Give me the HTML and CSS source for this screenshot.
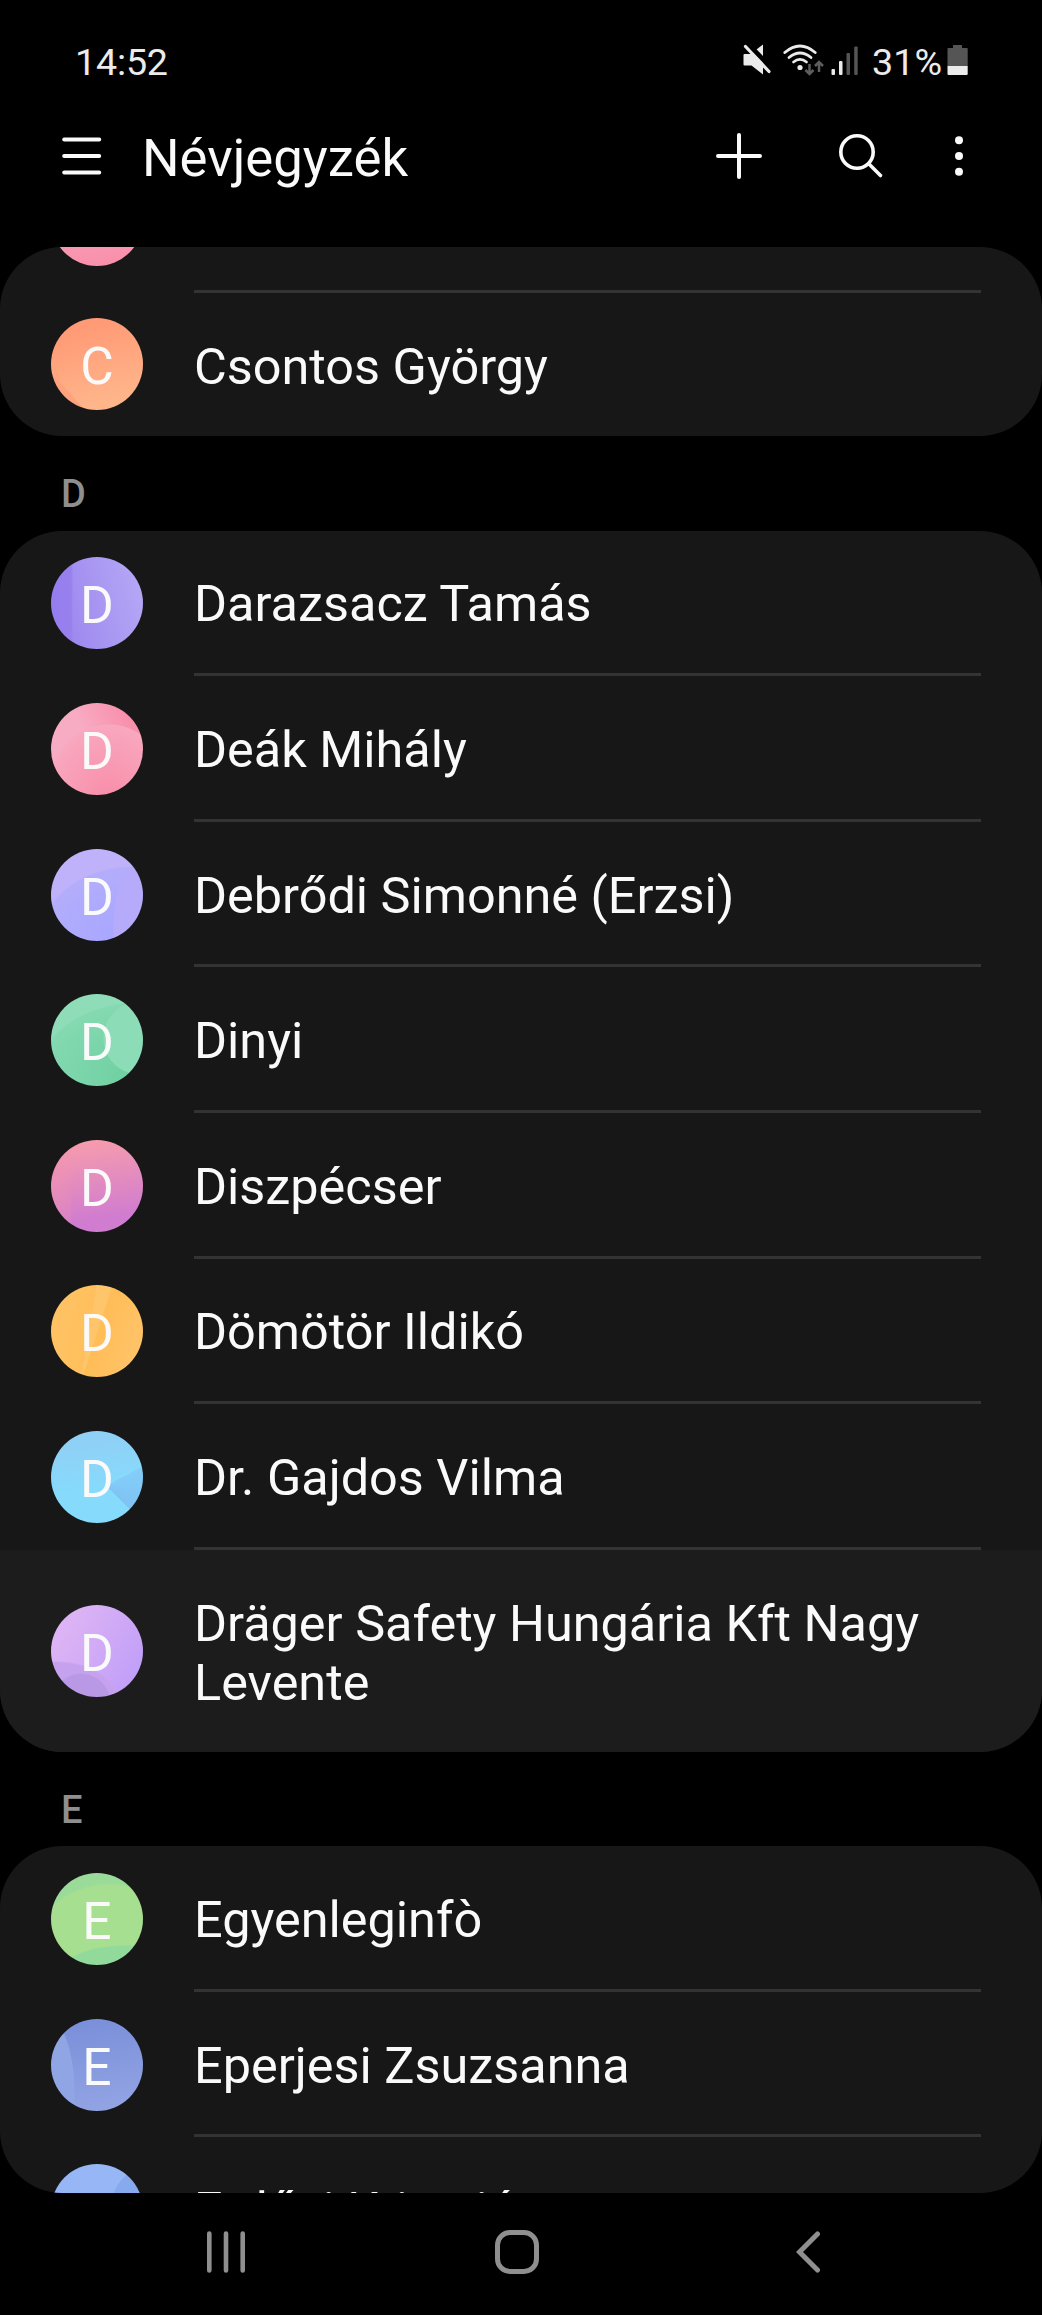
FILE: index.html
```html
<!DOCTYPE html>
<html lang="hu">
<head>
<meta charset="utf-8">
<title>Névjegyzék</title>
<link rel="stylesheet" href="styles.css">
</head>
<body>
<div class="phone">
  <header class="status">
    <span class="clock">14:52</span>
    <div class="indicators">
      <svg class="mute" width="29" height="32" viewBox="0 0 29 32"><path d="M1.500 10h6L20 0.500V30.500L8.500 21.500h-7a1 1 0 0 1-1-1V11a1 1 0 0 1 1-1z" fill="#ebebeb"/><path d="M4 -1L30 26" stroke="#000" stroke-width="5"/><path d="M2.500 2.500L26 27.500" stroke="#ebebeb" stroke-width="3.200" stroke-linecap="round"/></svg>
      <svg class="wifi" width="41" height="32" viewBox="0 0 41 32" fill="none"><g stroke="#ebebeb" stroke-width="2.800" stroke-linecap="round"><path d="M1.800 8.500Q17 -4.500 32.200 8.500"/><path d="M6 13.500Q17 4.500 28 13.500"/><path d="M10.500 18Q17 12.800 23.500 18"/></g><circle cx="17" cy="23.500" r="2.600" fill="#ebebeb"/><g stroke="#5e5e5e" stroke-width="2.500"><path d="M26.500 20v10M22.500 26l4 4 4-4M36 28V18M32 22l4-4 4 4"/></g></svg>
      <svg class="signal" width="28" height="32" viewBox="0 0 28 32"><g fill="#ebebeb"><rect x="0.500" y="25" width="3.500" height="6" rx="1"/><rect x="8" y="17" width="3.500" height="14" rx="1"/></g><g fill="#555"><rect x="15.500" y="9" width="3.500" height="22" rx="1"/><rect x="23.200" y="2.500" width="3.500" height="28.500" rx="1"/></g></svg>
      <span class="percent">31%</span>
      <svg class="battery" width="21" height="32" viewBox="0 0 21 32"><path d="M6 4V1.500Q6 1 6.500 1h8q.5 0 .5.500V4h5q.7 0 .7.700V22H.5V4.700Q.5 4 1.200 4z" fill="#555"/><path d="M.5 22h20.200v8q0 1-1 1H1.500q-1 0-1-1z" fill="#ebebeb"/></svg>
    </div>
  </header>
  <div class="toolbar">
    <svg class="menu" width="40" height="40" viewBox="0 0 40 40" stroke="#fafafa" stroke-width="4" stroke-linecap="round"><path d="M2.200 3.500h35M2.200 20h35M2.200 36.500h35"/></svg>
    <h1 class="title">Névjegyzék</h1>
    <svg class="add" width="48" height="48" viewBox="0 0 48 48" stroke="#fafafa" stroke-width="4" stroke-linecap="round"><path d="M24 3v42M3 24h42"/></svg>
    <svg class="search" width="46" height="46" viewBox="0 0 46 46" fill="none" stroke="#fafafa" stroke-width="3.600" stroke-linecap="round"><circle cx="19" cy="19" r="16.200"/><path d="M31 31l11.500 11.500"/></svg>
    <svg class="more" width="10" height="40" viewBox="0 0 10 40" fill="#fafafa"><circle cx="5" cy="4.300" r="4"/><circle cx="5" cy="20" r="4"/><circle cx="5" cy="35.700" r="4"/></svg>
  </div>
  <main class="contacts">
    <section class="card card-first">
      <div class="row row-cut-top"><span class="avatar pink"></span><span class="name"></span></div>
      <div class="row"><span class="avatar orange">C</span><span class="name">Csontos György</span></div>
    </section>
    <h2 class="letter">D</h2>
    <section class="card">
      <div class="row"><span class="avatar violet">D</span><span class="name">Darazsacz Tamás</span></div>
      <div class="row"><span class="avatar rose">D</span><span class="name">Deák Mihály</span></div>
      <div class="row"><span class="avatar lavender">D</span><span class="name">Debrődi Simonné (Erzsi)</span></div>
      <div class="row"><span class="avatar green">D</span><span class="name">Dinyi</span></div>
      <div class="row"><span class="avatar magenta">D</span><span class="name">Diszpécser</span></div>
      <div class="row"><span class="avatar amber">D</span><span class="name">Dömötör Ildikó</span></div>
      <div class="row"><span class="avatar sky">D</span><span class="name">Dr. Gajdos Vilma</span></div>
      <div class="row row-tall"><span class="avatar lilac">D</span><span class="name">Dräger Safety Hungária Kft Nagy Levente</span></div>
    </section>
    <h2 class="letter">E</h2>
    <section class="card card-last">
      <div class="row"><span class="avatar lime">E</span><span class="name">Egyenleginfò</span></div>
      <div class="row"><span class="avatar indigo">E</span><span class="name">Eperjesi Zsuzsanna</span></div>
      <div class="row"><span class="avatar blue">E</span><span class="name">Erdősi Krisztián</span></div>
    </section>
  </main>
  <nav class="navbar">
    <svg class="recents" width="40" height="42" viewBox="0 0 40 42" stroke="#8f8f8f" stroke-width="4.600" stroke-linecap="round"><path d="M3.300 2.500v37M20 2.500v37M36.700 2.500v37"/></svg>
    <svg class="home" width="44" height="44" viewBox="0 0 44 44" fill="none" stroke="#8f8f8f" stroke-width="5"><rect x="2.500" y="2.500" width="39" height="39" rx="12.500"/></svg>
    <svg class="back" width="24" height="42" viewBox="0 0 24 42" fill="none" stroke="#8f8f8f" stroke-width="5" stroke-linecap="round"><path d="M21.500 3L3.500 21l18 18"/></svg>
  </nav>
</div>
</body>
</html>
```
FILE: styles.css
```css
* { box-sizing: border-box; }
body { margin: 0; background: #000; font-family: Roboto, sans-serif; color: #fafafa; }
h1, h2 { margin: 0; font-weight: 400; }
svg { display: block; flex: none; }
.phone { width: 1042px; height: 2315px; overflow: hidden; display: flex; flex-direction: column; }
.status { height: 100px; padding: 0 74px 0 75px; display: flex; justify-content: space-between; font-size: 37.700px; line-height: 44px; color: #ebebeb; }
.clock { margin-top: 40px; letter-spacing: -0.200px; }
.indicators { display: flex; align-items: flex-start; padding-top: 44px; }
.wifi { margin-left: 11px; }
.signal { margin-left: 7px; }
.percent { margin: -4px 5px 0 13px; }
.toolbar { height: 147px; padding: 0 77.700px 0 62px; display: flex; align-items: flex-start; }
.menu { margin-top: 36px; }
.title { margin: 26px auto 0 40px; font-size: 52.700px; line-height: 64px; }
.add { margin-top: 32px; }
.search { margin: 33px 0 0 75.300px; }
.more { margin: 36px 0 0 70.300px; }
.card { background: #171717; border-radius: 62px; overflow: hidden; }
.card-first { height: 189px; display: flex; flex-direction: column; justify-content: flex-end; }
.card-last { height: 347.200px; }
.row { height: 145.620px; flex: none; display: flex; align-items: flex-start; padding: 26.800px 61px 0 51px; background: linear-gradient(#333, #333) 194px 100% / 787px 3px no-repeat; }
.row:last-child { background-image: none; }
.card-first .row:last-child { height: 143px; padding-top: 25px; }
.card-first .name { margin-top: 19px; }
.row-tall { height: 202px; background-color: #1c1c1c; padding-top: 0; align-items: center; }
.avatar { flex: none; width: 92px; height: 92px; border-radius: 50%; text-align: center; font-size: 51.500px; line-height: 97px; }
.name { width: 787px; margin: 17px 0 0 51px; font-size: 50.400px; line-height: 59px; }
.row-tall .name { margin-top: 4px; }
.letter { height: 94.500px; padding: 34px 0 0 61px; font-size: 38px; line-height: 48px; font-weight: 500; color: #8f8f8f; }

/* Avatar fills: soft gradients with a facet or curve laid over them */
.pink { background: linear-gradient(170deg, #f8acc4, #f98ea9); }
.orange { background:
  radial-gradient(ellipse 42px 58px at 47px 52px, #ffb48a00 0, #ffb48a00 99%, #ffffff00 100%),
  linear-gradient(48deg, #ff9f7c 0, #ffa27e 19%, #ffb48a00 20%),
  linear-gradient(165deg, #ff9a76 15%, #ffb58a 85%); }
.violet { background:
  linear-gradient(90deg, #957dee 0, #9881ee 22%, #ffffff00 24%),
  linear-gradient(75deg, #9a85ee 10%, #b8aaf6); }
.rose { background:
  radial-gradient(ellipse 65px 80px at 58px 101px, #f98ba7 0, #f8a8bf 99%, #ffffff00 100%),
  linear-gradient(65deg, #f8acc4 45%, #f88fab 85%); }
.lavender { background:
  radial-gradient(ellipse 36px 70px at 98px 78px, #b6abfb 98%, #ffffff00 100%),
  radial-gradient(ellipse 95px 75px at 82px 92px, #a8a7ff 20%, #b3adfb 98%, #ffffff00 100%),
  #c0b2fa; }
.green { background:
  radial-gradient(ellipse 34px 36px at 86px 44px, #8cdcb7 97%, #ffffff00 100%),
  radial-gradient(ellipse 110px 75px at 95px 82px, #6ccf9f 0, #84d9b1 98%, #ffffff00 100%),
  #8edcb8; }
.magenta { background:
  linear-gradient(90deg, #f493ae66 0, #f493ae33 21%, #ffffff00 23%),
  linear-gradient(172deg, #f59bae 8%, #d07cd0 82%); }
.amber { background:
  linear-gradient(108deg, #ffffff00 50%, #ffbd57 51%, #ffc368 90%),
  linear-gradient(100deg, #ffc262 20%, #ffbf5c 42%, #ffc56b 43%); }
.sky { background:
  linear-gradient(45deg, #ffffff00 49%, #ffffff00 50%),
  conic-gradient(from 62deg at 55px 55px, #83cdf8 0deg, #7fc3f4 72deg, #ffffff00 73deg),
  linear-gradient(170deg, #8fd1f6 20%, #86dafc 60%); }
.lilac { background:
  radial-gradient(circle 30px at 30px 98px, #b999e6 95%, #ffffff00 100%),
  radial-gradient(ellipse 62px 42px at 6px 98px, #c6a2ee 96%, #ffffff00 100%),
  linear-gradient(120deg, #dcb3f4 20%, #c2a0f8 85%); }
.lime { background:
  radial-gradient(ellipse 70px 32px at 74px 104px, #92d99c 96%, #ffffff00 100%),
  radial-gradient(ellipse 82px 78px at 58px 88px, #a6df90 97%, #ffffff00 100%),
  #9adb99; }
.indigo { background:
  radial-gradient(ellipse 30px 80px at -6px 75px, #90a5e4 97%, #ffffff00 100%),
  linear-gradient(170deg, #7b90da 10%, #91a3e3 90%); }
.blue { background:
  radial-gradient(circle 40px at 100px 42px, #87a9ee 97%, #ffffff00 100%),
  #96b6f6; }

.navbar { height: 121.500px; padding: 38px 0 0 205.500px; display: flex; align-items: flex-start; }
.home { margin: -1px 0 0 249.500px; }
.back { margin-left: 257.200px; }
```
